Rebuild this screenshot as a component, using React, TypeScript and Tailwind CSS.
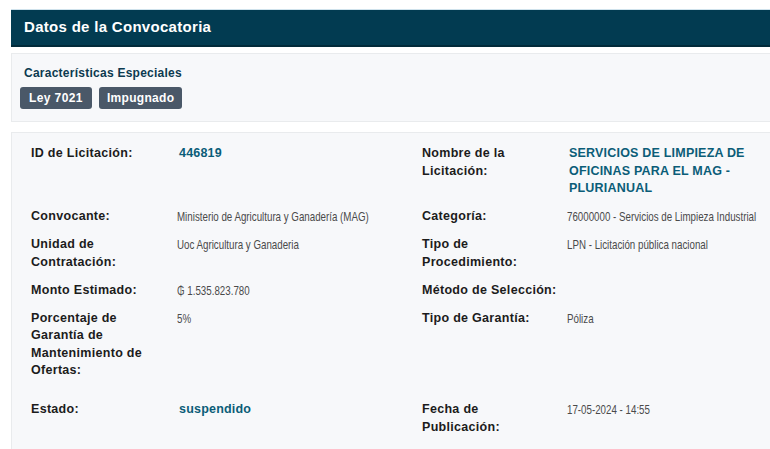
import React from 'react';

const labelFont = { fontFamily: '"Liberation Sans", Arial, sans-serif' };
const valueFont = { fontFamily: '"Liberation Sans", Arial, sans-serif' };

type Field = { label: string; value?: string; accent?: boolean };

const rows: [Field, Field][] = [
  [
    { label: 'ID de Licitación:', value: '446819', accent: true },
    { label: 'Nombre de la Licitación:', value: 'SERVICIOS DE LIMPIEZA DE OFICINAS PARA EL MAG - PLURIANUAL', accent: true },
  ],
  [
    { label: 'Convocante:', value: 'Ministerio de Agricultura y Ganadería (MAG)' },
    { label: 'Categoría:', value: '76000000 - Servicios de Limpieza Industrial' },
  ],
  [
    { label: 'Unidad de Contratación:', value: 'Uoc Agricultura y Ganaderia' },
    { label: 'Tipo de Procedimiento:', value: 'LPN - Licitación pública nacional' },
  ],
  [
    { label: 'Monto Estimado:', value: '₲ 1.535.823.780' },
    { label: 'Método de Selección:', value: '' },
  ],
  [
    { label: 'Porcentaje de Garantía de Mantenimiento de Ofertas:', value: '5%' },
    { label: 'Tipo de Garantía:', value: 'Póliza' },
  ],
  [
    { label: 'Estado:', value: 'suspendido', accent: true },
    { label: 'Fecha de Publicación:', value: '17-05-2024 - 14:55' },
  ],
];

function Label({ text }: { text: string }) {
  return (
    <div className="pr-2 text-[12.5px] font-bold leading-[17.5px] tracking-[0.3px] text-[#1c1c1c]" style={labelFont}>
      {text}
    </div>
  );
}

function Value({ field }: { field: Field }) {
  if (field.accent) {
    return (
      <div className="pl-[2px] pr-4 text-[12.5px] font-bold leading-[17.5px] tracking-[0.2px] text-[#0b5d78]" style={labelFont}>
        {field.value}
      </div>
    );
  }
  // valores en fuente angosta: se comprime en X
  return (
    <div className="overflow-visible">
      <div className="origin-left scale-x-[0.75] text-[13px] leading-[17.5px] text-[#4a4a4a] whitespace-nowrap" style={valueFont}>
        {field.value}
      </div>
    </div>
  );
}

export default function App() {
  return (
    <div className="w-[770px] h-[449px] overflow-hidden bg-white">
      <div className="w-[800px] pl-[11px] pt-[9px]">
        <div className="border-t border-[#cfe2ec] bg-[#023b51] border-b-2 border-b-[#012a3a] h-[38px] flex items-center pl-[13px]">
          <h1 className="text-[15px] font-bold text-white tracking-[0.3px]" style={labelFont}>
            Datos de la Convocatoria
          </h1>
        </div>

        <div className="mt-[6px] h-[69px] border border-[#e9ebed] bg-[#f7f8fa] pl-[12px] pt-[10px]">
          <div className="text-[12px] font-bold text-[#0c3a50] tracking-[0.25px]" style={labelFont}>
            Características Especiales
          </div>
          <div className="mt-[5px] flex gap-[7px] -ml-[4px]">
            <span className="rounded-[3px] bg-[#4a5868] px-[9px] h-[22px] flex items-center text-[12px] font-bold text-white tracking-[0.4px]" style={labelFont}>
              Ley 7021
            </span>
            <span className="rounded-[3px] bg-[#4a5868] px-[8px] h-[22px] flex items-center text-[12px] font-bold text-white tracking-[0.3px]" style={labelFont}>
              Impugnado
            </span>
          </div>
        </div>

        <div className="mt-[10px] h-[330px] border border-[#e9ebed] bg-[#f7f8fa] pl-[19px] pt-[12px]">
          <div className="grid grid-cols-[146px_245px_145px_1fr] gap-y-[10.5px]">
            {rows.map(([a, b], i) => (
              <React.Fragment key={i}>
                <div className={i === 4 ? 'pb-[11px]' : ''}>
                  <Label text={a.label} />
                </div>
                <Value field={a} />
                <Label text={b.label} />
                <Value field={b} />
              </React.Fragment>
            ))}
          </div>
        </div>
      </div>
    </div>
  );
}
